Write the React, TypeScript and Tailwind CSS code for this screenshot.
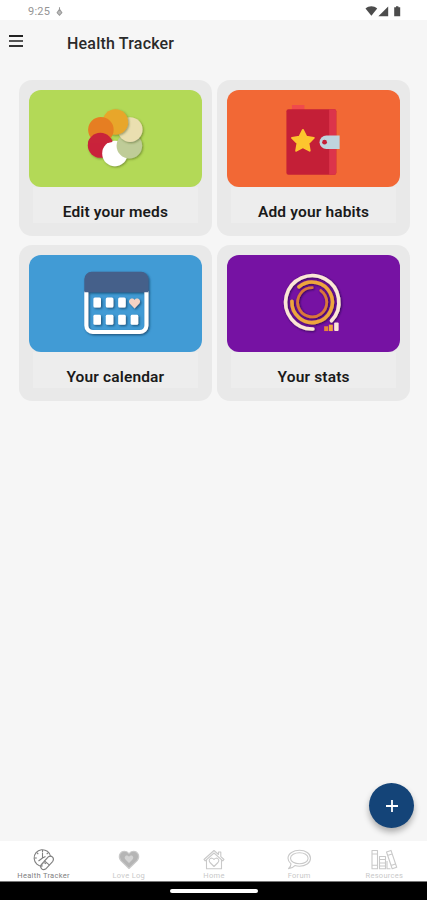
import type { ReactNode } from "react";

interface Tile {
  label: string;
  color: string;
  art: ReactNode;
}

interface Tab {
  label: string;
  icon: ReactNode;
  active?: boolean;
}

function MedsArt() {
  return (
    <svg viewBox="0 0 173 97" className="h-full w-full">
      <defs>
        <clipPath id="red-top">
          <path d="M50 36h40v14.5L79 53H50z" />
        </clipPath>
        <filter id="pill-shadow" x="-30%" y="-30%" width="160%" height="160%">
          <feDropShadow dx="1" dy="1" stdDeviation="1" floodColor="#3c4a10" floodOpacity="0.5" />
        </filter>
      </defs>
      <g filter="url(#pill-shadow)">
        <circle cx="71.5" cy="55.3" r="12.6" fill="#c9243a" />
        <circle cx="86" cy="63.5" r="12.7" fill="#fff" />
        <circle cx="100.5" cy="55.8" r="12.8" fill="#bfcc98" />
      </g>
      <g filter="url(#pill-shadow)">
        <circle cx="101.3" cy="39.6" r="12.4" fill="#eadfb0" />
      </g>
      <g filter="url(#pill-shadow)">
        <circle cx="86.5" cy="32" r="12.8" fill="#e8a62a" />
      </g>
      <circle cx="72" cy="39.7" r="12.8" fill="#e67e22" />
      {/* the ring of pills overlaps all the way round, so the red one is painted twice */}
      <circle cx="71.5" cy="55.3" r="12.6" fill="#c9243a" clipPath="url(#red-top)" />
    </svg>
  );
}

function HabitsArt() {
  return (
    <svg viewBox="0 0 173 97" className="h-full w-full">
      <path d="M65 15h12.5v7H65z" fill="#f04a4c" />
      <rect x="59.5" y="19.3" width="50" height="65.5" rx="2" fill="#c41f37" />
      <path d="M102.3 19.3h5a2 2 0 0 1 2 2v61.5a2 2 0 0 1-2 2h-5z" fill="#dc344b" />
      <path
        d="M76 40l3.4 6.8 7.5 1.1-5.4 5.3 1.3 7.5-6.8-3.6-6.7 3.6 1.3-7.5-5.5-5.3 7.5-1.1z"
        fill="#fdc52e"
        stroke="#fdc52e"
        strokeWidth="2"
        strokeLinejoin="round"
      />
      <path d="M99.5 45.4h13.3V59H99.5a6.8 6.8 0 0 1 0-13.6z" fill="#bfd5de" />
      <circle cx="97.7" cy="52.2" r="2.4" fill="#c41f37" />
    </svg>
  );
}

const DAY_COLUMNS = [68.3, 80.7, 93.1, 105.6];

function CalendarArt() {
  return (
    <svg viewBox="0 0 173 97" className="h-full w-full">
      <defs>
        <filter id="cal-shadow" x="-20%" y="-20%" width="140%" height="140%">
          <feDropShadow dx="1.2" dy="1.2" stdDeviation="0.8" floodColor="#123a5c" floodOpacity="0.75" />
        </filter>
      </defs>
      <g filter="url(#cal-shadow)">
        <path d="M57.4 36v34.5a6.5 6.5 0 0 0 6.5 6.5h47.2a6.5 6.5 0 0 0 6.5-6.5V36" fill="none" stroke="#fff" strokeWidth="4" />
        <path d="M55.4 37.3V24a7.3 7.3 0 0 1 7.3-7.3h49.6a7.3 7.3 0 0 1 7.3 7.3v13.3z" fill="#45608a" />
        {DAY_COLUMNS.slice(0, 3).map((x) => (
          <rect key={x} x={x - 3.8} y="42.6" width="7.6" height="10" rx="1.5" fill="#fff" />
        ))}
        {DAY_COLUMNS.map((x) => (
          <rect key={x} x={x - 3.8} y="59.7" width="7.6" height="10" rx="1.5" fill="#fff" />
        ))}
        <path d="M105.7 53.6l-4.8-5.2c-2.6-3.2 2.2-7.2 4.8-3.5 2.6-3.7 7.4.3 4.8 3.5z" fill="#f5d3c4" />
      </g>
    </svg>
  );
}

function StatsArt() {
  return (
    <svg viewBox="0 0 173 97" className="h-full w-full">
      <defs>
        <filter id="ring-shadow" x="-20%" y="-20%" width="140%" height="140%">
          <feDropShadow dx="0.8" dy="0.8" stdDeviation="0.8" floodColor="#1d0038" floodOpacity="0.8" />
        </filter>
      </defs>
      <g fill="none" strokeLinecap="round" filter="url(#ring-shadow)">
        <path d="M86 74A26.7 26.7 0 1 1 104.6 65.8" stroke="#fbe6d6" strokeWidth="3.6" />
        <path d="M65 46.2A20.3 20.3 0 1 0 72 31.9" stroke="#eda63c" strokeWidth="3.6" />
        <path d="M85.3 32.7A14.6 14.6 0 1 0 93.9 35.5" stroke="#d9763a" strokeWidth="2.8" />
      </g>
      <rect x="97.3" y="71.3" width="4" height="4.8" fill="#e8843a" />
      <rect x="102" y="69.7" width="4" height="6.4" fill="#efa53f" />
      <rect x="107.3" y="67.5" width="4.5" height="8.6" rx="1" fill="#fbe6d6" />
    </svg>
  );
}

const TILES: Tile[] = [
  { label: "Edit your meds", color: "bg-[#b3d957]", art: <MedsArt /> },
  { label: "Add your habits", color: "bg-[#f26835]", art: <HabitsArt /> },
  { label: "Your calendar", color: "bg-[#419bd5]", art: <CalendarArt /> },
  { label: "Your stats", color: "bg-[#7612a3]", art: <StatsArt /> },
];

const TABS: Tab[] = [
  {
    label: "Health Tracker",
    active: true,
    icon: (
      <>
        <path d="M10.5 18.3A8.3 8.3 0 1 1 18.6 8.5" />
        <path d="M10.5 2v2.5M2.4 10h2.4M10.5 5v5l-4 3M4.8 4.6l1.5 1.5M16 4.8l-1.3 1.3M13.5 8.5l-3 1.5" />
        <path d="M12 13.5l4.5-4.8c3.2-1.8 6.2 1.7 4.3 4.6l-7.2 7.8c-3.2 1.8-6.3-1.7-4.3-4.6z" />
        <path d="M12.5 12.8l5 4.3M14 16c-2-2.5-5-.5-4 2" />
      </>
    ),
  },
  {
    label: "Love Log",
    icon: (
      <>
        <path
          d="M12 20.5L3.8 12.6C.5 8.4 3.2 3.2 7.5 3.2c2 0 3.5.9 4.5 2.5 1-1.6 2.5-2.5 4.5-2.5 4.3 0 7 5.2 3.7 9.4z"
          fill="#b5b5b5"
        />
        <path d="M12 15l-3.5-3.4c-2.4-3 1.5-5.6 3.5-2.8 2-2.8 5.9-.2 3.5 2.8z" fill="#d3d3d3" stroke="none" />
      </>
    ),
  },
  {
    label: "Home",
    icon: (
      <>
        <path d="M2 11.5L12 2.5l4.5 4V4h2.3v4.6l3.2 2.9-1.2 1.3L12 5 3.2 12.8z" />
        <path d="M4.5 12v8.8h15V12" />
        <path d="M12 18.5l-4-4c-2.6-3.2 1.8-6.2 4-3 2.2-3.2 6.6-.2 4 3z" />
      </>
    ),
  },
  {
    label: "Forum",
    icon: (
      <>
        <path d="M12.5 2.3c6 0 11 3.3 11 8s-5 8-11 8c-1.7 0-3.2-.2-4.6-.7-1.8 2-3.9 2.9-6.4 3 1.5-1.2 2.4-2.6 2.5-4.7C2.2 14.4 1 12.5 1 10.3c0-4.700 5.500-8 11.500-8z" />
        <path d="M12.5 4.800c4.800 0 8.600 2.200 8.600 5.500s-3.800 5.500-8.600 5.500-9-2.200-9-5.500 4.200-5.500 9-5.500z" />
      </>
    ),
  },
  {
    label: "Resources",
    icon: (
      <>
        <path d="M0 2.5h5.5v18.3H0zM0 6h5.5M0 17.3h5.5M7.5 8.5h6v12.3h-6zM7.5 11.5h6M7.5 15h6M7.5 18h6" />
        <path d="M14.5 4l4.5-1.6 5.7 16.8-4.5 1.6zM15.5 7.5L20 6M19 17.5l4.5-1.6M15 13v7.8h3.5" />
      </>
    ),
  },
];

function StatusBar() {
  return (
    <div className="flex h-5 items-center justify-between bg-white pt-0.5 pr-[25px] pl-7">
      <div className="flex items-center gap-[6px] text-[11px] leading-none tracking-[0.2px] text-[#949494]">
        <span>9:25</span>
        <svg viewBox="0 0 8 10" className="h-[9px] w-[7px]" fill="#bbb" stroke="#999" strokeWidth="1.2">
          <path d="M4 0v3M4 2.5L1.3 6.5 4 9.3l2.7-2.8z" />
        </svg>
      </div>
      <svg viewBox="0 0 37 12" className="h-3 w-[37px]" fill="#4c4c4c">
        <path d="M0.5 3.5C4 .4 8.7.4 12.2 3.5L6.4 10.8z" />
        <path d="M23.2 1.5v9.8h-9.8z" />
        <path d="M31 1.2h2.4v1h1.8v9.1h-6V2.2H31z" />
      </svg>
    </div>
  );
}

function TileCard({ label, color, art }: Tile) {
  return (
    <div className="flex h-[156px] flex-col rounded-[13px] bg-[#e9e9e9] pt-2.5 pr-2.5 pl-[10.5px]">
      <div className={`h-[97px] shrink-0 overflow-hidden rounded-[12px] ${color}`}>{art}</div>
      <div className="mx-1 flex h-9 items-center justify-center bg-[#ededed] pt-[15px] text-[15.5px] leading-none font-semibold tracking-[0.15px] text-[#1a1a1a]">
        {label}
      </div>
    </div>
  );
}

export default function App() {
  return (
    <div className="flex h-[900px] w-[427px] flex-col bg-[#f6f6f6] font-[Roboto,sans-serif]">
      <StatusBar />

      <header className="flex h-15 shrink-0 items-start pl-[9px]">
        <div className="mt-[15px] flex w-3.5 flex-col gap-[3px]">
          <span className="h-0.5 bg-[#222]" />
          <span className="h-0.5 bg-[#555]" />
          <span className="h-0.5 bg-[#333]" />
        </div>
        <h1 className="mt-3.5 ml-11 text-[16px] leading-5 font-medium tracking-[0.2px] text-[#2a2a2a]">Health Tracker</h1>
      </header>

      <main className="grid grow grid-cols-2 content-start gap-x-[5px] gap-y-[9px] pr-[17px] pl-[18.5px]">
        {TILES.map((tile) => (
          <TileCard key={tile.label} {...tile} />
        ))}
      </main>

      <div className="flex justify-end pr-[13px] pb-[13px]">
        <button className="flex h-[45px] w-[45px] items-center justify-center rounded-full bg-[#144478] shadow-[0_4px_6px_rgba(0,0,0,0.3)]">
          <svg viewBox="0 0 12 12" className="h-3 w-3" stroke="#fff" strokeWidth="1.8">
            <path d="M6 0v12M0 6h12" />
          </svg>
        </button>
      </div>

      <nav className="grid h-10 shrink-0 grid-cols-5 bg-white pl-px">
        {TABS.map(({ label, icon, active }) => (
          <div
            key={label}
            className={`flex flex-col items-center pt-[7px] ${active ? "text-[#808080]" : "text-[#c9c9c9]"}`}
          >
            <svg
              viewBox="0 0 24 24"
              className="h-6 w-6 shrink-0 overflow-visible"
              fill="none"
              stroke="currentColor"
              strokeWidth="1.1"
              strokeLinejoin="round"
            >
              {icon}
            </svg>
            <span className="text-[7.5px] leading-[8px] tracking-[0.3px] whitespace-nowrap">{label}</span>
          </div>
        ))}
      </nav>

      <div className="flex h-[19px] shrink-0 items-center justify-center border-t border-[#777] bg-black">
        <span className="h-1 w-[88px] rounded-full bg-white" />
      </div>
    </div>
  );
}
